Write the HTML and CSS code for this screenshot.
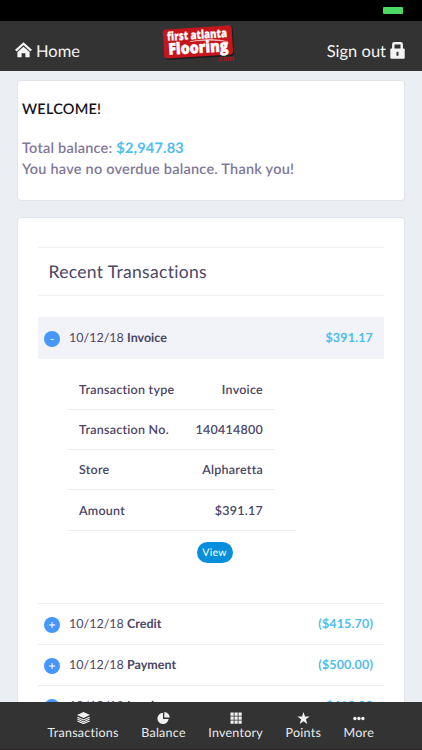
FILE: index.html
```html
<!DOCTYPE html>
<html lang="en">
<head>
<meta charset="utf-8">
<title>First Atlanta Flooring</title>
<link rel="stylesheet" href="styles.css">
</head>
<body>
<div class="status"><span class="battery"></span></div>
<header class="header">
  <a class="home">
    <svg width="17" height="16" viewBox="0 0 17 16"><path d="M.8 8.600 8.500 1.800l7.700 6.800" fill="none" stroke="#f4f4f4" stroke-width="2.200"/><path d="M8.500 4.800 14.600 10.100V15.300H10.400V11.200H6.600V15.300H2.400V10.100Z" fill="#f4f4f4"/></svg>
    <span>Home</span>
  </a>
  <svg class="logo" width="74" height="40" viewBox="0 0 74 40">
    <g transform="rotate(-3.500 36 20)">
      <rect x="2.500" y="6" width="69" height="29" rx="3" fill="#1b1b1b"/>
      <rect x="1.500" y="4.500" width="69" height="29" rx="3" fill="#c4161c"/>
      <text class="logo-top" x="5.500" y="16" textLength="60" lengthAdjust="spacingAndGlyphs">first atlanta</text>
      <path d="M28 18.100Q50 15 66 20.500Q50 16.700 28 18.100Z" fill="#fff" stroke="#fff" stroke-width=".3"/>
      <text class="logo-main" x="6" y="30" textLength="60" lengthAdjust="spacingAndGlyphs">Flooring</text>
    </g>
    <text class="logo-com" x="55" y="38" textLength="17" lengthAdjust="spacingAndGlyphs">.com</text>
  </svg>
  <a class="signout">
    <span>Sign out</span>
    <svg width="15" height="17" viewBox="0 0 15 17"><path d="M3.300 8V2.200Q3.300 1.200 4.300 1.200H10.700Q11.700 1.200 11.700 2.200V8" fill="none" stroke="#f4f4f4" stroke-width="2.400"/><rect x=".3" y="6.500" width="14.400" height="10.300" rx="1" fill="#f4f4f4"/><path d="M6.500 9.800h2v4h-2z" fill="#333"/></svg>
  </a>
</header>
<main class="main">
  <section class="card welcome">
    <h1>WELCOME!</h1>
    <p>Total balance: <span class="money">$2,947.83</span></p>
    <p class="overdue">You have no overdue balance. Thank you!</p>
  </section>
  <section class="card recent">
    <h2><span>Recent Transactions</span></h2>
    <div class="row open"><span class="toggle">-</span><span class="label"><span class="date">10/12/18</span> <b>Invoice</b></span><span class="money">$391.17</span></div>
    <div class="details">
      <div class="detail"><span>Transaction type</span><span>Invoice</span></div>
      <div class="detail"><span>Transaction No.</span><span>140414800</span></div>
      <div class="detail"><span>Store</span><span>Alpharetta</span></div>
      <div class="detail last"><span>Amount</span><span>$391.17</span></div>
      <a class="view">View</a>
    </div>
    <div class="row"><span class="toggle">+</span><span class="label"><span class="date">10/12/18</span> <b>Credit</b></span><span class="money">($415.70)</span></div>
    <div class="row"><span class="toggle">+</span><span class="label"><span class="date">10/12/18</span> <b>Payment</b></span><span class="money">($500.00)</span></div>
    <div class="row"><span class="toggle">+</span><span class="label"><span class="date">10/12/18</span> <b>Invoice</b></span><span class="money">$418.83</span></div>
  </section>
</main>
<nav class="nav">
  <a class="tab"><svg width="13" height="12" viewBox="0 0 13 12"><path d="M6.500 0 13 3 6.500 6.100 0 3Z" fill="#f1f1f1"/><path d="M.4 5.200 6.500 8 12.600 5.200M.4 7.100 6.500 9.900 12.600 7.100M.4 9 6.500 11.600 12.600 9" fill="none" stroke="#f1f1f1" stroke-width="1.100"/></svg><span>Transactions</span></a>
  <a class="tab"><svg width="13" height="12" viewBox="0 0 13 12"><path d="M6 .8A5.600 5.600 0 1 0 11.600 7H6Z" fill="#f1f1f1"/><path d="M7.300 0A5.500 5.500 0 0 1 12.700 5.600H7.300Z" fill="#f1f1f1"/></svg><span>Balance</span></a>
  <a class="tab"><svg width="12" height="12" viewBox="0 0 12 12"><path d="M.5 .5h3.200v3.200H.5zM4.500 .5h3.200v3.200H4.500zM8.500 .5h3.200v3.200H8.500zM.5 4.500h3.200v3.200H.5zM4.500 4.500h3.200v3.200H4.500zM8.500 4.500h3.200v3.200H8.500zM.5 8.500h3.200v3.200H.5zM4.500 8.500h3.200v3.200H4.500zM8.500 8.500h3.200v3.200H8.500z" fill="#f1f1f1"/></svg><span>Inventory</span></a>
  <a class="tab"><svg width="13" height="12" viewBox="0 0 13 12"><path d="M6.500 0 8 4.400H12.700L8.900 7.300 10.300 12 6.500 9.200 2.700 12 4.100 7.300 .3 4.400H5Z" fill="#f1f1f1"/></svg><span>Points</span></a>
  <a class="tab"><svg width="12" height="12" viewBox="0 0 12 12"><g fill="#f1f1f1"><circle cx="1.900" cy="6.500" r="1.700"/><circle cx="5.900" cy="6.500" r="1.700"/><circle cx="9.900" cy="6.500" r="1.700"/></g></svg><span>More</span></a>
</nav>
</body>
</html>
```
FILE: styles.css
```css
* { box-sizing: border-box; }
body {
  margin: 0;
  width: 422px;
  height: 750px;
  display: flex;
  flex-direction: column;
  overflow: hidden;
  background: #ebeef3;
  color: #4b4566;
  font-family: Lato, sans-serif;
  font-size: 13px;
  text-rendering: geometricPrecision;
}
h1, h2, p { margin: 0; }
svg { display: block; flex: none; }
.status {
  flex: none;
  height: 21px;
  background: #000;
  padding: 7px 19px 0 0;
  display: flex;
  justify-content: flex-end;
}
.battery { width: 20px; height: 7px; border-radius: 1px; background: #4bd964; }
.header {
  flex: none;
  height: 50px;
  padding: 0 17px 0 15px;
  background: #333;
  display: grid;
  grid-template-columns: 147px 74px 1fr;
  color: #f4f4f4;
  font-size: 16.500px;
  line-height: 18px;
}
.home, .signout { display: flex; align-items: flex-start; padding-top: 21px; white-space: nowrap; }
.home { gap: 4px; }
.signout { justify-content: flex-end; gap: 4px; }
.logo { margin-top: 2px; }
.logo-top { font: 800 12px "Open Sans", sans-serif; fill: #fff; stroke: #fff; stroke-width: .2px; }
.logo-main { font: 800 16px "Open Sans", sans-serif; fill: #fff; stroke: #fff; stroke-width: .5px; }
.logo-com { font: 700 7px "Open Sans", sans-serif; fill: #b5181d; }
.main { flex: 1; min-height: 0; overflow: hidden; padding: 9px 17px 0; }
.card { background: #fff; border: 1px solid #e2e4ec; border-radius: 4px; }
.welcome { height: 121px; padding: 18px 4px 0; color: #7f7799; font-size: 14.500px; font-weight: 600; line-height: 21px; letter-spacing: .22px; }
.welcome h1 { color: #16151c; font-size: 14.500px; font-weight: 600; line-height: 21px; margin-bottom: 18px; }
.money { color: #4dbdee; font-weight: 700; }
.recent { margin-top: 16px; height: 600px; padding: 29px 20px 0; }
h2 {
  height: 49px;
  margin-bottom: 21px;
  padding-left: 10.500px;
  border: solid #f0f0f2;
  border-width: 1px 0;
  font-size: 17.500px;
  font-weight: 400;
  line-height: 48px;
  letter-spacing: .32px;
}
.row { height: 41px; border-top: 1px solid #eeeef1; padding: 0 11px 2px 6px; display: flex; align-items: center; }
.row .label { flex: 1; margin-left: 9px; font-size: 12.500px; }
.row .money { font-size: 12.500px; letter-spacing: .15px; }
.open { height: 42px; background: #f2f3f8; border-color: #f2f3f8; }
.toggle {
  width: 16px;
  height: 16px;
  margin-top: 3px;
  border-radius: 50%;
  background: #4597fb;
  color: #fff;
  font-size: 12px;
  line-height: 15px;
  text-align: center;
}
.details { height: 244px; padding: 11px 0 0 30px; font-size: 12.500px; font-weight: 600; letter-spacing: .25px; }
.detail { width: 206px; height: 40px; padding: 0 11px; border-bottom: 1px solid #ebebf2; display: flex; justify-content: space-between; align-items: center; }
.detail.last { width: 227px; height: 41px; padding: 0 32px 0 11px; }
.view {
  width: 36px;
  height: 21px;
  margin: 11px 0 0 128.500px;
  border-radius: 11px;
  background: #078fdd;
  color: #fff;
  display: block;
  text-align: center;
  font-size: 10.500px;
  font-weight: 400;
  line-height: 22px;
}
.nav {
  flex: none;
  height: 48px;
  padding: 10px 48px 0 47.500px;
  background: #333;
  border-bottom: 1px solid #2a2525;
  color: #ececec;
  display: flex;
  justify-content: space-between;
  font-size: 12.500px;
  line-height: 17px;
  letter-spacing: .25px;
}
.tab { display: flex; flex-direction: column; align-items: center; }
```
